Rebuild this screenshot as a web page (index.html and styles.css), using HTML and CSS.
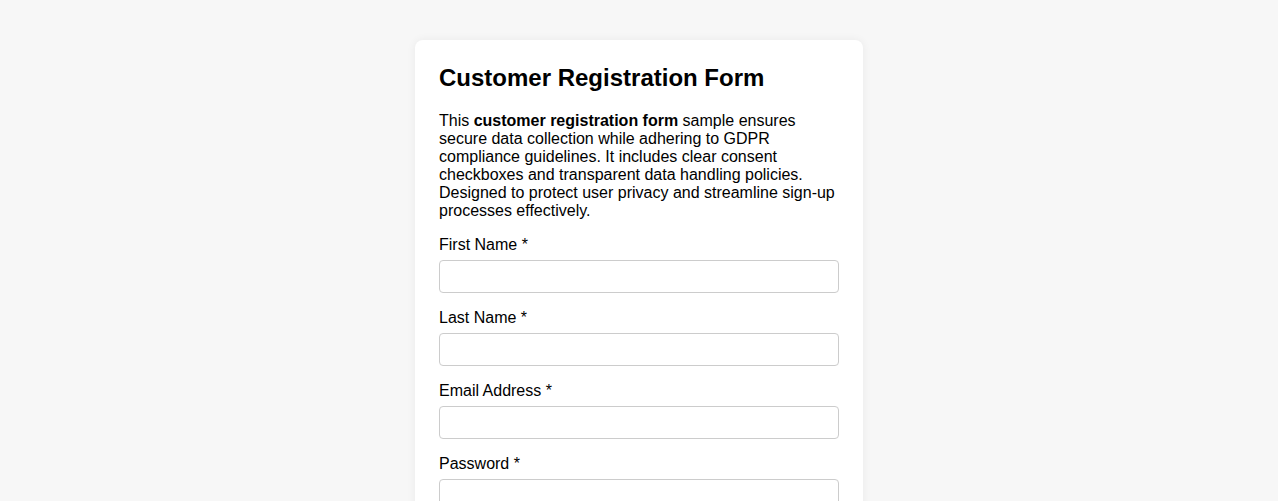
FILE: index.html
```html
<!DOCTYPE html>
<html lang="en">
<head>
    <meta charset="UTF-8">
    <meta name="viewport" content="width=device-width, initial-scale=1.0">
    <title>Customer Registration Form</title>
    <link rel="stylesheet" href="styles.css">
</head>
<body>
    <div class="form-card">
        <h1>Customer Registration Form</h1>

        <p class="intro">
            This <strong>customer registration form</strong> sample ensures secure data collection while adhering to GDPR compliance guidelines. It includes clear consent checkboxes and transparent data handling policies. Designed to protect user privacy and streamline sign-up processes effectively.
        </p>

        <form>
            <div class="field">
                <label for="first-name">First Name *</label>
                <input type="text" id="first-name" required>
            </div>
            <div class="field">
                <label for="last-name">Last Name *</label>
                <input type="text" id="last-name" required>
            </div>
            <div class="field">
                <label for="email">Email Address *</label>
                <input type="email" id="email" required>
            </div>
            <div class="field">
                <label for="password">Password *</label>
                <input type="password" id="password" required>
            </div>
        </form>
    </div>
</body>
</html>
```

FILE: styles.css
```css
/* base */
body {
    margin: 0;
    padding: 40px 20px;
    background: #f7f7f7;
    font-family: "Liberation Sans", Arial, sans-serif;
    color: #000;
    display: flex;
    justify-content: center;
}

/* card */
.form-card {
    width: 400px;
    padding: 24px;
    background: #fff;
    border-radius: 8px;
    box-shadow: 0 0 10px rgba(0, 0, 0, 0.06);
}

h1 {
    margin: 0 0 20px;
    font-size: 24px;
    line-height: 28px;
}

.intro {
    margin: 0 0 15px;
    font-size: 16px;
    line-height: 18px;
}

/* fields */
.field {
    margin-bottom: 15px;
}

.field label {
    display: block;
    padding-top: 1px;
    font-size: 16px;
    line-height: 18px;
    margin-bottom: 6px;
}

.field input {
    display: block;
    box-sizing: border-box;
    width: 100%;
    height: 33px;
    padding: 6px 8px;
    border: 1px solid #ccc;
    border-radius: 4px;
    font-family: inherit;
    font-size: 16px;
    background: #fff;
}
```
